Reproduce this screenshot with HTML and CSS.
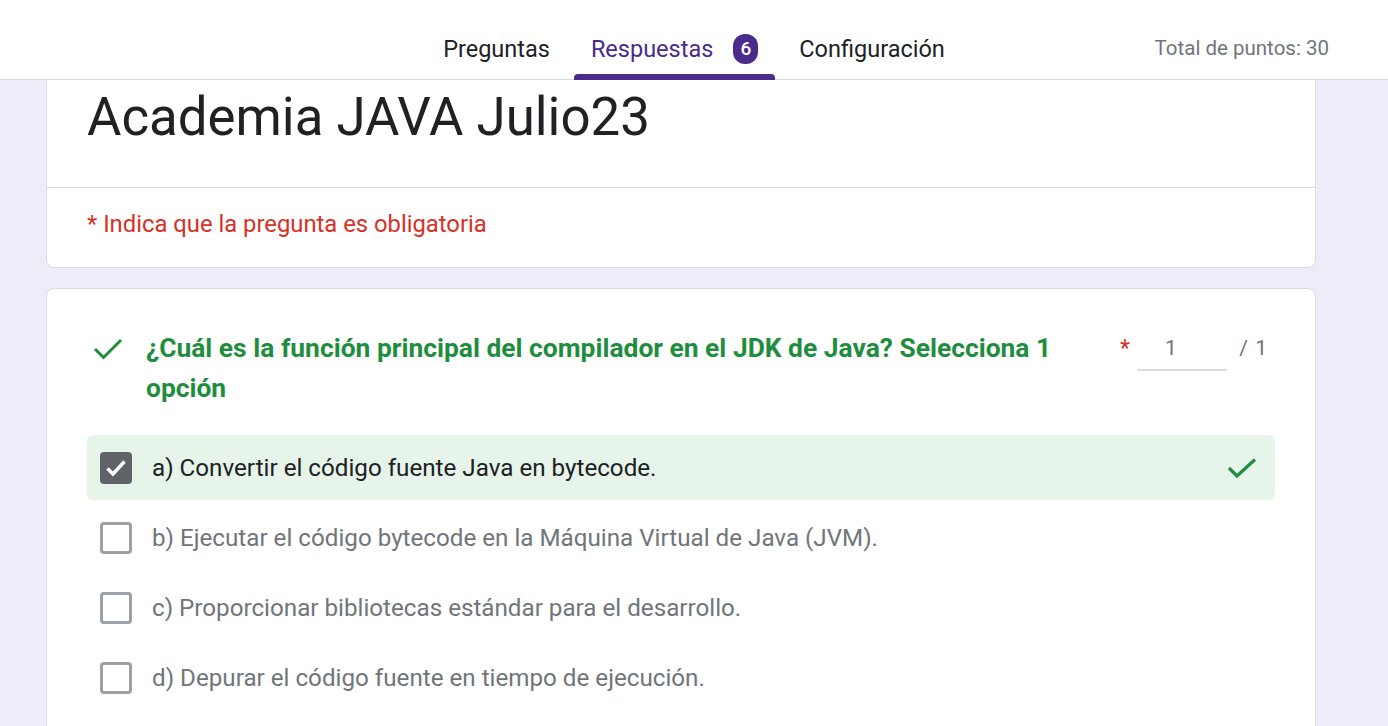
FILE: index.html
```html
<!DOCTYPE html>
<html lang="es">
<head>
<meta charset="utf-8">
<title>Academia JAVA Julio23</title>
<link rel="stylesheet" href="styles.css">
</head>
<body>
<header class="topbar">
  <nav class="tabs">
    <div class="tab">Preguntas</div>
    <div class="tab tab-active">Respuestas <span class="badge">6</span></div>
    <div class="tab">Configuración</div>
  </nav>
  <div class="total">Total de puntos: 30</div>
</header>
<main class="page">
  <section class="card card-head">
    <h1 class="title">Academia JAVA Julio23</h1>
    <div class="required-note">* Indica que la pregunta es obligatoria</div>
  </section>
  <section class="card card-q">
    <div class="q-row">
      <svg class="q-check" viewBox="0 0 30 24" width="30" height="24"><polyline points="2,12 10.5,20.5 28,3" fill="none" stroke="#1e8e3e" stroke-width="3"/></svg>
      <div class="q-text">¿Cuál es la función principal del compilador en el JDK de Java? Selecciona 1 opción</div>
      <div class="points">
        <span class="star">*</span>
        <span class="pts-input">1</span>
        <span class="pts-max">/ 1</span>
      </div>
    </div>
    <div class="options">
      <div class="opt opt-correct">
        <span class="box box-checked"><svg viewBox="0 0 32 32" width="32" height="32"><polyline points="7.5,16.5 13,22 24.5,9.5" fill="none" stroke="#fff" stroke-width="3.4"/></svg></span>
        <span class="opt-text opt-text-sel">a) Convertir el código fuente Java en bytecode.</span>
        <svg class="opt-mark" viewBox="0 0 30 22" width="30" height="22"><polyline points="2,11 10,19 28,2.5" fill="none" stroke="#1e8e3e" stroke-width="3.2"/></svg>
      </div>
      <div class="opt">
        <span class="box"></span>
        <span class="opt-text">b) Ejecutar el código bytecode en la Máquina Virtual de Java (JVM).</span>
      </div>
      <div class="opt">
        <span class="box"></span>
        <span class="opt-text">c) Proporcionar bibliotecas estándar para el desarrollo.</span>
      </div>
      <div class="opt">
        <span class="box"></span>
        <span class="opt-text">d) Depurar el código fuente en tiempo de ejecución.</span>
      </div>
    </div>
  </section>
</main>
</body>
</html>
```
FILE: styles.css
```css
* { box-sizing: border-box; }
html, body { margin: 0; padding: 0; }
body {
  font-family: Roboto, "Liberation Sans", Arial, sans-serif;
  background: #f0ebf8;
  color: #202124;
  height: 726px;
  overflow: hidden;
}
.topbar {
  height: 80px;
  background: #fff;
  border-bottom: 1px solid #dadce0;
  display: flex;
  align-items: stretch;
  justify-content: center;
  position: relative;
}
.tabs {
  display: flex;
  align-items: stretch;
}
.tab {
  display: flex;
  align-items: center;
  font-size: 23.5px;
  color: #202124;
  padding: 18px 24px 0;
  position: relative;
}
.tab-active { color: #4a2b8c; padding: 18px 17px 0 17px; }
.tab-active::after {
  content: "";
  position: absolute;
  left: 0; right: 0; bottom: -1px;
  height: 6px;
  background: #4a2b8c;
  border-radius: 4px 4px 0 0;
}
.badge {
  display: inline-flex;
  align-items: center;
  justify-content: center;
  width: 25px;
  height: 30px;
  margin-left: 20px;
  border-radius: 12px;
  background: #4a2b8c;
  color: #fff;
  font-size: 19px;
  font-weight: 500;
}
.total {
  position: absolute;
  right: 59px;
  top: 0;
  height: 78px;
  padding-top: 18px;
  display: flex;
  align-items: center;
  font-size: 20.5px;
  color: #70757a;
}
.page {
  width: 1270px;
  margin-left: 46px;
  display: flex;
  flex-direction: column;
  gap: 20px;
}
.card {
  background: #fff;
  border: 1px solid #dadce0;
  border-radius: 8px;
}
.card-head {
  border-top: none;
  border-radius: 0 0 8px 8px;
}
.title {
  margin: 0;
  height: 108px;
  padding: 4px 40px 0;
  font-size: 52.8px;
  font-weight: 400;
  line-height: 66px;
  border-bottom: 1px solid #dadce0;
}
.required-note {
  padding: 20px 40px 0;
  height: 79px;
  font-size: 23.8px;
  line-height: 32px;
  color: #d93025;
}
.card-q {
  padding: 40px 40px 40px;
  min-height: 500px;
}
.q-row {
  display: flex;
  align-items: flex-start;
}
.q-check {
  margin: 8px 0 0 6px;
  flex: none;
}
.q-text {
  margin-left: 23px;
  width: 940px;
  font-size: 26.4px;
  font-weight: 700;
  line-height: 39.5px;
  color: #1e8e3e;
}
.points {
  margin-left: auto;
  flex: none;
  display: flex;
  align-items: flex-start;
  font-size: 21px;
  color: #70757a;
  padding-top: 6px;
  white-space: nowrap;
}
.star { color: #d93025; font-size: 23px; margin-right: 7px; }
.pts-input {
  width: 90px;
  height: 36px;
  padding-left: 28px;
  border-bottom: 2px solid #dadce0;
  line-height: 26px;
}
.pts-max {
  margin-left: 12px;
  margin-right: 8px;
  width: 28px;
  text-align: right;
  word-spacing: 2px;
  line-height: 26px;
}
.options {
  margin-top: 27px;
  display: flex;
  flex-direction: column;
  gap: 5px;
}
.opt {
  display: flex;
  align-items: center;
  height: 65px;
  padding: 0 18px 0 13px;
  border-radius: 6px;
}
.opt-correct { background: #e6f4ea; }
.box {
  width: 32px;
  height: 32px;
  border: 3px solid #9aa0a6;
  border-radius: 4px;
  flex: none;
  display: flex;
  align-items: center;
  justify-content: center;
}
.box-checked { background: #5f6368; border: none; }
.opt-text {
  margin-left: 20px;
  font-size: 24.2px;
  color: #70757a;
}
.opt-text-sel { color: #202124; }
.opt-mark { margin-left: auto; }
```
